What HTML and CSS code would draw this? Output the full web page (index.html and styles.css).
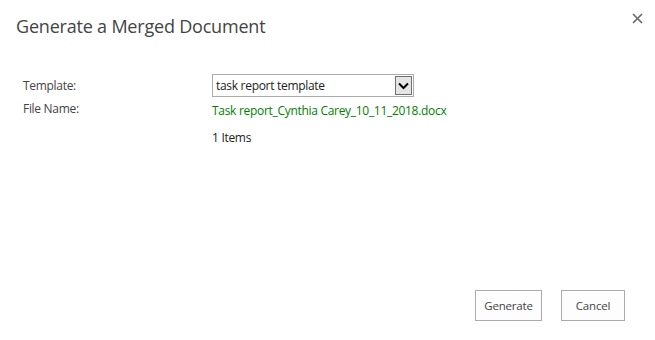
FILE: index.html
```html
<!DOCTYPE html>
<html>
<head>
<meta charset="utf-8">
<link rel="stylesheet" href="styles.css">
</head>
<body>
<div class="dialog">
  <div class="header">
    <h1 class="title">Generate a Merged Document</h1>
    <button class="close" aria-label="Close">
      <svg width="11" height="11" viewBox="0 0 11 11"><path d="M1 1L10 10M10 1L1 10" stroke="#666" stroke-width="1.6" fill="none"/></svg>
    </button>
  </div>
  <div class="form">
    <div class="label">Template:</div>
    <div class="value">
      <div class="select">
        <span class="select-text">task report template</span>
        <span class="select-arrow">
          <svg width="11" height="8" viewBox="0 0 11 8"><path d="M1 1.5L5.5 6L10 1.5" stroke="#000" stroke-width="2" fill="none"/></svg>
        </span>
      </div>
    </div>
    <div class="label">File Name:</div>
    <div class="value filename">Task report_Cynthia Carey_10_11_2018.docx</div>
    <div class="label"></div>
    <div class="value items">1 Items</div>
  </div>
  <div class="footer">
    <button class="btn btn-generate">Generate</button>
    <button class="btn btn-cancel">Cancel</button>
  </div>
</div>
</body>
</html>
```
FILE: styles.css
```css
html, body {
  margin: 0;
  padding: 0;
  background: #fff;
}
body {
  font-family: "Open Sans", "Noto Sans", sans-serif;
  color: #444;
}
.dialog {
  height: 340px;
  box-sizing: border-box;
  display: flex;
  flex-direction: column;
  padding: 0 30px 19px 16px;
}
.header {
  display: flex;
  justify-content: space-between;
  align-items: flex-start;
  height: 74px;
}
.title {
  margin: 14px 0 0 0;
  font-size: 18px;
  font-weight: 400;
  color: #444;
  letter-spacing: -0.2px;
}
.close {
  background: none;
  border: 0;
  padding: 0;
  margin: 13px -18px 0 0;
  width: 11px;
  height: 11px;
  display: flex;
}
.form {
  display: grid;
  grid-template-columns: 189px 1fr;
  padding-left: 7px;
  font-size: 12px;
  letter-spacing: -0.3px;
  flex: 1;
  align-content: start;
}
.label {
  color: #444;
  line-height: 23px;
  height: 23px;
}
.value {
  line-height: 23px;
}
.select {
  width: 202px;
  height: 23px;
  box-sizing: border-box;
  border: 1px solid #ababab;
  display: flex;
  align-items: center;
  color: #222;
}
.select-text {
  flex: 1;
  padding-left: 3px;
  line-height: 21px;
}
.select-arrow {
  width: 17px;
  height: 19px;
  margin-right: 1px;
  box-sizing: border-box;
  border: 1px solid #707070;
  background: #e5e5e5;
  display: flex;
  align-items: center;
  justify-content: center;
}
.filename {
  color: #008000;
  margin-top: 2px;
}
.items {
  color: #222;
  margin-top: 4px;
}
.footer {
  display: flex;
  justify-content: flex-end;
  gap: 19px;
}
.btn {
  font-family: inherit;
  font-size: 11.5px;
  letter-spacing: -0.2px;
  color: #444;
  background: #fdfdfd;
  border: 1px solid #ababab;
  height: 31px;
  padding: 0;
}
.btn-generate { width: 67px; }
.btn-cancel { width: 64px; }
```
